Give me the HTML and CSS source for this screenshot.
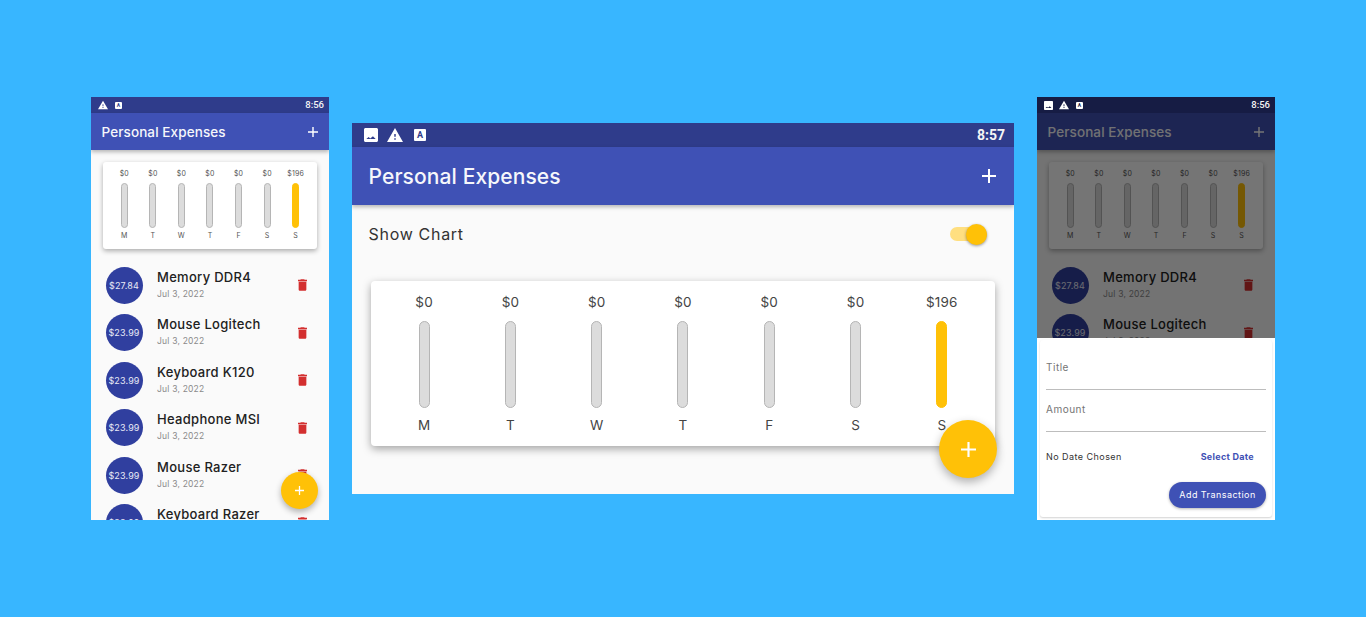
FILE: index.html
```html
<!DOCTYPE html>
<html lang="en">
<head>
<meta charset="utf-8">
<title>Personal Expenses</title>
<link rel="stylesheet" href="styles.css">
</head>
<body>
<svg class="defs" aria-hidden="true">
  <symbol id="i-warn" viewBox="1 2 22 19"><path d="M1 21h22L12 2 1 21zm12-3h-2v-2h2v2zm0-4h-2v-4h2v4z"/></symbol>
  <symbol id="i-img" viewBox="3 3 18 18"><path d="M21 19V5c0-1.100-.9-2-2-2H5c-1.100 0-2 .9-2 2v14c0 1.100.9 2 2 2h14c1.100 0 2-.9 2-2zM9 14.500l2 2 3.500-3 3.500 3.500H6z" fill-rule="evenodd"/></symbol>
  <symbol id="i-trash" viewBox="5 3 14 18"><path d="M6 19c0 1.100.9 2 2 2h8c1.100 0 2-.9 2-2V7H6v12zM19 4h-3.500l-1-1h-5l-1 1H5v2h14V4z"/></symbol>
  <symbol id="i-plus" viewBox="0 0 14 14"><path d="M7 0v14M0 7h14" stroke="currentColor" stroke-width="2" fill="none"/></symbol>
</svg>
<main class="stage">

  <section class="phone">
    <div class="status">
      <svg class="st-warn"><use href="#i-warn"/></svg>
      <span class="st-a">A</span>
      <span class="time">8:56</span>
    </div>
    <header class="appbar"><h1>Personal Expenses</h1><svg class="plus"><use href="#i-plus"/></svg></header>
    <div class="content">
      <div class="chart">
        <div class="col"><span>$0</span><i class="bar"></i><span>M</span></div>
        <div class="col"><span>$0</span><i class="bar"></i><span>T</span></div>
        <div class="col"><span>$0</span><i class="bar"></i><span>W</span></div>
        <div class="col"><span>$0</span><i class="bar"></i><span>T</span></div>
        <div class="col"><span>$0</span><i class="bar"></i><span>F</span></div>
        <div class="col"><span>$0</span><i class="bar"></i><span>S</span></div>
        <div class="col"><span>$196</span><i class="bar full"></i><span>S</span></div>
      </div>
      <ul class="list">
        <li class="item"><b class="amt">$27.84</b><div class="info"><strong>Memory DDR4</strong><small>Jul 3, 2022</small></div><svg class="trash"><use href="#i-trash"/></svg></li>
        <li class="item"><b class="amt">$23.99</b><div class="info"><strong>Mouse Logitech</strong><small>Jul 3, 2022</small></div><svg class="trash"><use href="#i-trash"/></svg></li>
        <li class="item"><b class="amt">$23.99</b><div class="info"><strong>Keyboard K120</strong><small>Jul 3, 2022</small></div><svg class="trash"><use href="#i-trash"/></svg></li>
        <li class="item"><b class="amt">$23.99</b><div class="info"><strong>Headphone MSI</strong><small>Jul 3, 2022</small></div><svg class="trash"><use href="#i-trash"/></svg></li>
        <li class="item"><b class="amt">$23.99</b><div class="info"><strong>Mouse Razer</strong><small>Jul 3, 2022</small></div><svg class="trash"><use href="#i-trash"/></svg></li>
        <li class="item"><b class="amt">$23.99</b><div class="info"><strong>Keyboard Razer</strong><small>Jul 3, 2022</small></div><svg class="trash"><use href="#i-trash"/></svg></li>
      </ul>
    </div>
    <button class="fab"><svg class="fab-plus"><use href="#i-plus"/></svg></button>
  </section>

  <section class="phone wide">
    <div class="status">
      <svg class="st-img"><use href="#i-img"/></svg>
      <svg class="st-warn"><use href="#i-warn"/></svg>
      <span class="st-a">A</span>
      <span class="time">8:57</span>
    </div>
    <header class="appbar"><h1>Personal Expenses</h1><svg class="plus"><use href="#i-plus"/></svg></header>
    <div class="content">
      <div class="toggle-row">
        <span>Show Chart</span>
        <div class="switch"><i class="thumb"></i></div>
      </div>
      <div class="chart">
        <div class="col"><span>$0</span><i class="bar"></i><span>M</span></div>
        <div class="col"><span>$0</span><i class="bar"></i><span>T</span></div>
        <div class="col"><span>$0</span><i class="bar"></i><span>W</span></div>
        <div class="col"><span>$0</span><i class="bar"></i><span>T</span></div>
        <div class="col"><span>$0</span><i class="bar"></i><span>F</span></div>
        <div class="col"><span>$0</span><i class="bar"></i><span>S</span></div>
        <div class="col"><span>$196</span><i class="bar full"></i><span>S</span></div>
      </div>
    </div>
    <button class="fab"><svg class="fab-plus"><use href="#i-plus"/></svg></button>
  </section>

  <section class="phone modal">
    <div class="status">
      <svg class="st-img"><use href="#i-img"/></svg>
      <svg class="st-warn"><use href="#i-warn"/></svg>
      <span class="st-a">A</span>
      <span class="time">8:56</span>
    </div>
    <header class="appbar"><h1>Personal Expenses</h1><svg class="plus"><use href="#i-plus"/></svg></header>
    <div class="content">
      <div class="chart">
        <div class="col"><span>$0</span><i class="bar"></i><span>M</span></div>
        <div class="col"><span>$0</span><i class="bar"></i><span>T</span></div>
        <div class="col"><span>$0</span><i class="bar"></i><span>W</span></div>
        <div class="col"><span>$0</span><i class="bar"></i><span>T</span></div>
        <div class="col"><span>$0</span><i class="bar"></i><span>F</span></div>
        <div class="col"><span>$0</span><i class="bar"></i><span>S</span></div>
        <div class="col"><span>$196</span><i class="bar full"></i><span>S</span></div>
      </div>
      <ul class="list">
        <li class="item"><b class="amt">$27.84</b><div class="info"><strong>Memory DDR4</strong><small>Jul 3, 2022</small></div><svg class="trash"><use href="#i-trash"/></svg></li>
        <li class="item"><b class="amt">$23.99</b><div class="info"><strong>Mouse Logitech</strong><small>Jul 3, 2022</small></div><svg class="trash"><use href="#i-trash"/></svg></li>
      </ul>
    </div>
    <div class="scrim"></div>
    <div class="sheet">
      <form class="sheet-card">
        <div class="field">Title</div>
        <div class="field">Amount</div>
        <div class="date-row"><span>No Date Chosen</span><b>Select Date</b></div>
        <div class="actions"><span class="submit">Add Transaction</span></div>
      </form>
    </div>
  </section>

</main>
</body>
</html>
```

FILE: styles.css
```css
* { box-sizing: border-box; margin: 0; padding: 0; }
html, body { height: 100%; }
body { background: #38b6ff; font-family: "Inter", "Lato", sans-serif; overflow: hidden; }
.defs { display: none; }

.stage { height: 617px; display: flex; align-items: center; justify-content: center; gap: 23px; }

/* Phone frames */
.phone { position: relative; width: 238px; height: 423px; background: #fafafa; overflow: hidden; flex: none; }
.phone.wide { width: 662px; height: 371px; }

.status { height: 16px; background: #2f3c8b; display: flex; align-items: center; padding: 0 5px 0 7px; color: #fff; }
.st-warn { width: 10px; height: 10px; fill: #fff; margin-right: 7px; }
.st-img { width: 9px; height: 9px; fill: #fff; margin-right: 6px; }
.st-a { width: 7px; height: 7px; background: #fff; color: #2f3c8b; font: 700 5px/7px "Roboto", sans-serif; text-align: center; border-radius: 1px; }
.time { margin-left: auto; font: 500 9.5px/1 "Roboto", sans-serif; color: #f5f5f5; }

.appbar { height: 37px; background: #3f51b5; display: flex; align-items: center; justify-content: space-between; padding: 0 11px 0 10.5px; color: #fff; box-shadow: 0 2px 4px rgba(0,0,0,.28); position: relative; z-index: 1; }
.appbar h1 { font-size: 13.5px; font-weight: 500; letter-spacing: .1px; color: #f6f7fb; }
.plus { width: 10px; height: 10px; }

.content { padding-top: 12px; }

/* Chart */
.chart { margin: 0 12px; height: 87px; background: #fff; border-radius: 3px; box-shadow: 0 2px 5px rgba(0,0,0,.32); display: grid; grid-template-columns: repeat(7, 1fr); padding: 0 7px; }
.col { display: flex; flex-direction: column; align-items: center; font-size: 7px; line-height: 9px; letter-spacing: .2px; color: #555; padding-top: 7px; }
.bar { display: block; width: 7px; height: 45px; margin: 5px 0 3px; border-radius: 4px; background: #dcdcdc; border: 1px solid #b5b5b5; }
.bar.full { background: #ffc107; border-color: #ffc107; }

/* List */
.list { list-style: none; margin-top: 12.25px; }
.item { height: 47.5px; display: flex; align-items: center; padding: 0 22px 0 14.5px; }
.amt { width: 37px; height: 37px; border-radius: 50%; background: #303f9f; color: #e8eaf6; font-size: 9px; font-weight: 400; letter-spacing: .15px; display: flex; align-items: center; justify-content: center; flex: none; }
.info { margin-left: 14.5px; flex: 1; display: flex; flex-direction: column; gap: 4px; margin-top: -2px; }
.info strong { font-size: 13px; line-height: 16px; font-weight: 500; letter-spacing: .3px; color: #212121; white-space: nowrap; }
.info small { font-size: 8.5px; line-height: 11px; letter-spacing: .2px; color: #8a8a8a; }
.trash { width: 9px; height: 12px; fill: #d32f2f; flex: none; }

/* FAB */
.fab { position: absolute; right: 11px; bottom: 11px; width: 37px; height: 37px; border: 0; border-radius: 50%; background: #ffc107; color: #fff; display: flex; align-items: center; justify-content: center; box-shadow: 0 3px 6px rgba(0,0,0,.3); }
.fab-plus { width: 9px; height: 9px; }

/* Wide (landscape) variant */
.wide .status { height: 24px; padding: 0 9px 0 12px; }
.wide .st-img { width: 14px; height: 14px; margin-right: 9px; }
.wide .st-warn { width: 16px; height: 14px; margin-right: 11px; }
.wide .st-a { width: 12px; height: 12px; font-size: 9px; line-height: 12px; }
.wide .time { font-size: 14px; font-weight: 700; }
.wide .appbar { height: 58px; padding: 0 18px 0 16.5px; }
.wide .appbar h1 { font-size: 21px; }
.wide .plus { width: 14px; height: 14px; }
.wide .content { padding-top: 0; }
.toggle-row { height: 58px; display: flex; align-items: center; justify-content: space-between; padding: 0 27px 0 16.5px; font-size: 16px; letter-spacing: .7px; color: #333; }
.switch { position: relative; width: 37px; height: 14px; border-radius: 7px; background: #ffdf80; }
.thumb { position: absolute; right: 0; top: -3.5px; width: 21px; height: 21px; border-radius: 50%; background: #ffc107; box-shadow: 0 1px 3px rgba(0,0,0,.4); }
.wide .chart { margin: 18px 19px 0; height: 165px; padding: 0 10px; border-radius: 4px; box-shadow: 0 3px 8px rgba(0,0,0,.35); }
.wide .col { font-size: 13.5px; line-height: 16px; color: #444; padding-top: 13px; }
.wide .bar { width: 11px; height: 87px; margin: 11px 0 9px; border-radius: 6px; }
.wide .fab { width: 58px; height: 58px; right: 17px; bottom: 16px; box-shadow: 0 4px 10px rgba(0,0,0,.3); }
.wide .fab-plus { width: 15px; height: 15px; }

/* Modal variant */
.scrim { position: absolute; inset: 16px 0 0 0; background: rgba(0,0,0,.54); z-index: 2; }
.modal .status { background: #161c44; position: relative; z-index: 3; }
.modal .st-a { color: #161c44; }
.sheet { position: absolute; left: 0; right: 0; bottom: 0; height: 182px; background: #fff; z-index: 4; padding: 2px 3px 3px; }
.sheet-card { height: 100%; background: #fff; border-radius: 3px; box-shadow: 0 1px 2px rgba(0,0,0,.18); padding: 8px 6px; }
.field { height: 42px; padding-top: 13px; font-size: 10px; line-height: 12px; letter-spacing: .5px; color: #757575; border-bottom: 1px solid #bdbdbd; }
.date-row { display: flex; justify-content: space-between; align-items: center; height: 20px; margin-top: 14px; padding-right: 12px; font-size: 9px; letter-spacing: .45px; color: #333; }
.date-row b { color: #3f51b5; font-weight: 700; letter-spacing: .3px; }
.actions { display: flex; justify-content: flex-end; margin-top: 16px; }
.submit { width: 97px; height: 26px; padding-bottom: 1px; border-radius: 13px; background: #3f51b5; color: #fff; font-size: 9px; letter-spacing: .45px; display: flex; align-items: center; justify-content: center; box-shadow: 0 1px 3px rgba(0,0,0,.3); }
```
